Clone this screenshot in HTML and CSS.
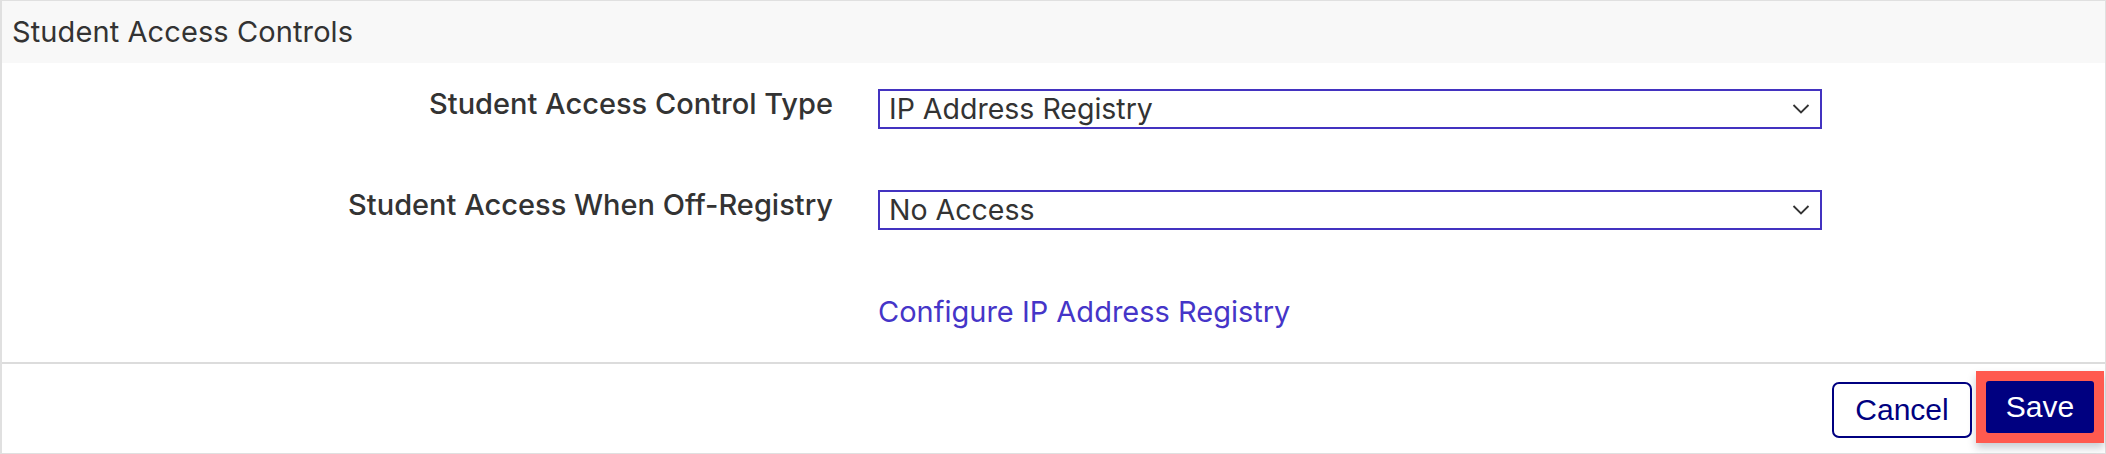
FILE: index.html
```html
<!DOCTYPE html>
<html lang="en">
<head>
<meta charset="utf-8">
<title>Student Access Controls</title>
<link rel="stylesheet" href="styles.css">
</head>
<body>
<section class="panel">
  <header class="panel-header">
    <h2 class="panel-title">Student Access Controls</h2>
  </header>
  <div class="panel-body">
    <div class="form-grid">
      <label class="field-label">Student Access Control Type</label>
      <div class="select">
        <span class="select-value">IP Address Registry</span>
        <svg class="chevron" viewBox="0 0 18 12" width="18" height="12" aria-hidden="true"><path d="M1.5 2 L9 9.5 L16.5 2" fill="none" stroke="#333" stroke-width="1.8"/></svg>
      </div>
      <label class="field-label">Student Access When Off-Registry</label>
      <div class="select">
        <span class="select-value">No Access</span>
        <svg class="chevron" viewBox="0 0 18 12" width="18" height="12" aria-hidden="true"><path d="M1.5 2 L9 9.5 L16.5 2" fill="none" stroke="#333" stroke-width="1.8"/></svg>
      </div>
      <span></span>
      <a class="config-link" href="#">Configure IP Address Registry</a>
    </div>
  </div>
  <footer class="panel-footer">
    <button class="btn btn-cancel" type="button">Cancel</button>
    <div class="highlight">
      <button class="btn btn-save" type="button">Save</button>
    </div>
  </footer>
</section>
</body>
</html>
```

FILE: styles.css
```css
* { box-sizing: border-box; }

html, body {
  margin: 0;
  padding: 0;
  background: #ffffff;
}

body {
  font-family: "Inter", "Liberation Sans", sans-serif;
  color: #333333;
}

.panel {
  width: 2106px;
  height: 454px;
  border: 1px solid #e0e0e0;
  border-left-width: 2px;
  display: flex;
  flex-direction: column;
}

.panel-header {
  height: 62px;
  background: #f8f8f8;
  display: flex;
  align-items: center;
  padding-left: 10px;
  padding-bottom: 2px;
}

.panel-title {
  margin: 0;
  font-size: 29px;
  font-weight: 400;
  letter-spacing: 0.1px;
  color: #333333;
}

.panel-body {
  padding-top: 26px;
  height: 301px;
  border-bottom: 2px solid #dcdcdc;
}

.form-grid {
  display: grid;
  grid-template-columns: 831px 944px;
  column-gap: 45px;
  row-gap: 61px;
  align-items: start;
}

.field-label {
  text-align: right;
  font-size: 29px;
  font-weight: 500;
  line-height: 30px;
  color: #333333;
}

.select {
  height: 40px;
  border: 2px solid #4333c0;
  display: flex;
  align-items: center;
  justify-content: space-between;
  padding: 0 10px 0 9px;
  background: #ffffff;
}

.select-value {
  font-size: 28.5px;
  color: #333333;
  line-height: 1;
}

.chevron {
  display: block;
}

.config-link {
  margin-top: 6px;
  font-size: 29px;
  color: #4535c8;
  text-decoration: none;
  line-height: 30px;
}

.panel-footer {
  flex: 1;
  display: flex;
  justify-content: flex-end;
  align-items: center;
  gap: 4px;
  padding-right: 0;
}

.btn {
  font-family: "Liberation Sans", Arial, sans-serif;
  font-size: 30px;
  cursor: pointer;
}

.btn-cancel {
  width: 140px;
  height: 56px;
  border: 2px solid #000080;
  border-radius: 7px;
  background: #ffffff;
  color: #000080;
  margin-top: 2px;
}

.highlight {
  padding: 10px;
  background: #ff5a4f;
  box-shadow: 0 5px 8px rgba(40, 60, 80, 0.25);
  margin-top: -4px;
  margin-right: 1px;
}

.btn-save {
  display: block;
  width: 108px;
  height: 52px;
  border: none;
  border-radius: 3px;
  background: #000080;
  color: #ffffff;
}
```
